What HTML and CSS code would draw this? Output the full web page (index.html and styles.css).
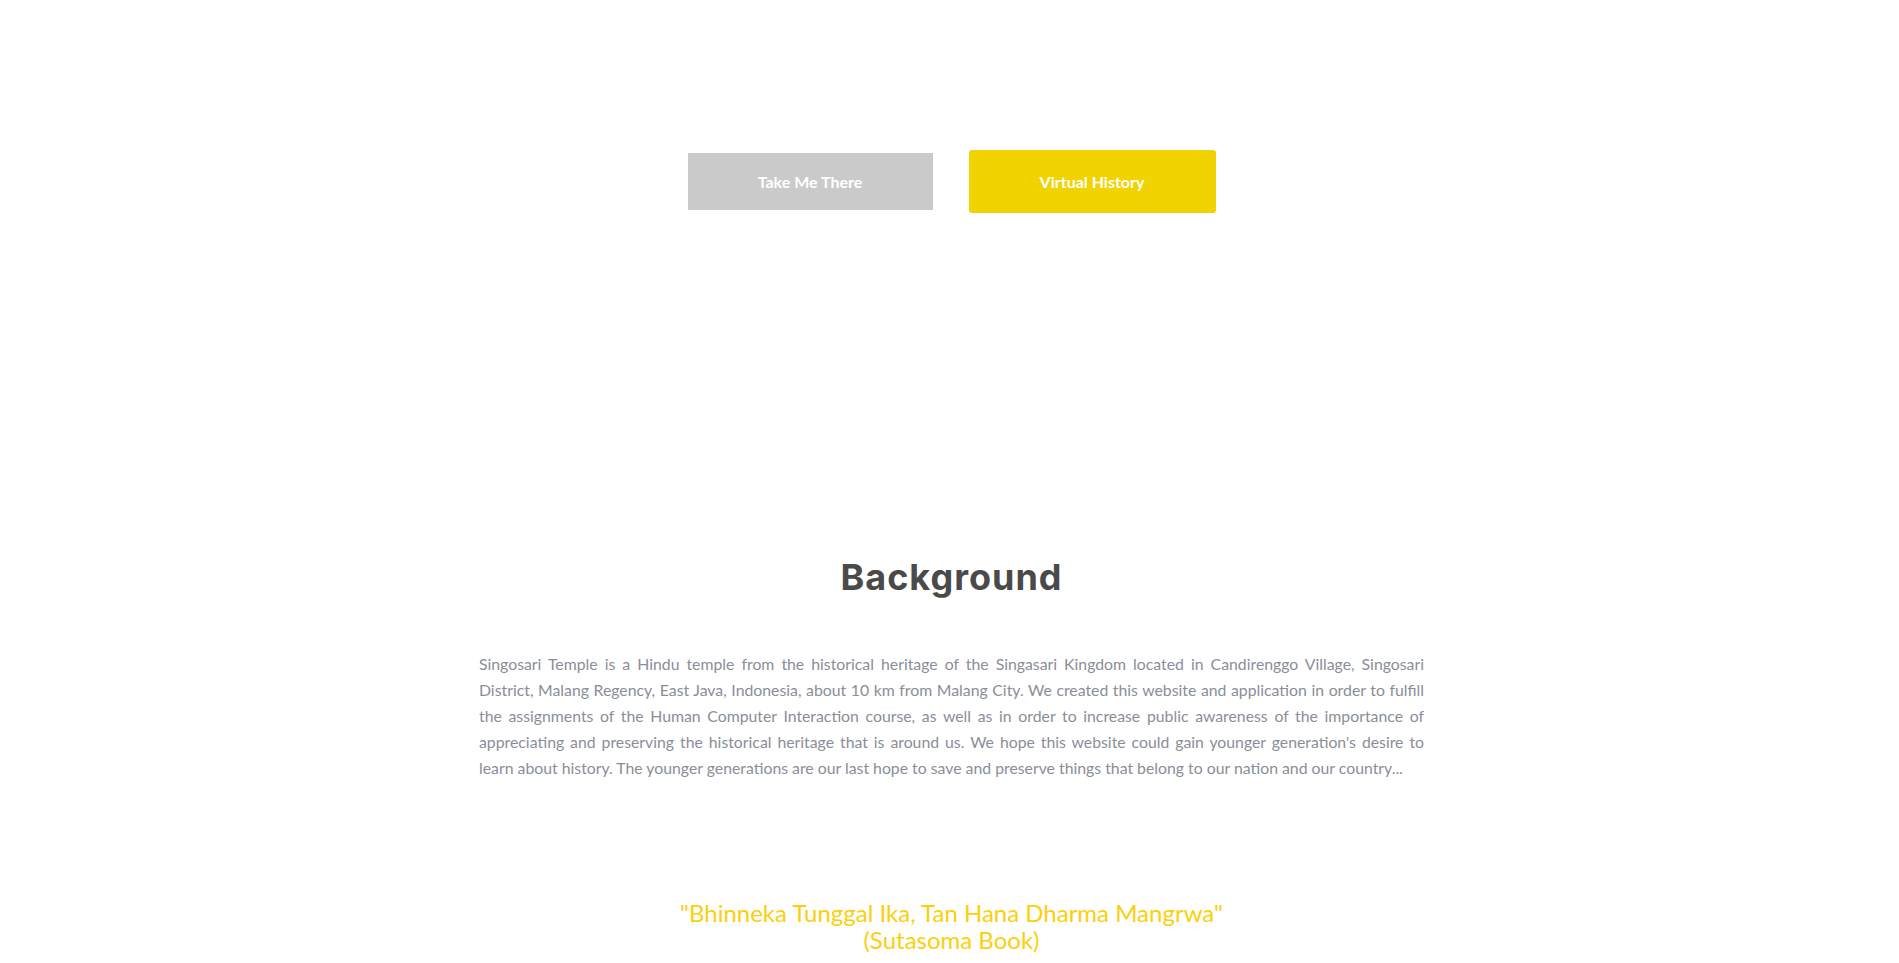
FILE: index.html
```html
<!DOCTYPE html>
<html lang="en">
<head>
<meta charset="utf-8">
<title>Singosari Temple</title>
<link rel="stylesheet" href="styles.css">
</head>
<body>
<section class="hero">
  <a class="btn btn-grey" href="#">Take Me There</a>
  <a class="btn btn-yellow" href="#">Virtual History</a>
</section>
<section class="background">
  <h2 class="title">Background</h2>
  <p class="text">Singosari Temple is a Hindu temple from the historical heritage of the Singasari Kingdom located in Candirenggo Village, Singosari District, Malang Regency, East Java, Indonesia, about 10 km from Malang City. We created this website and application in order to fulfill the assignments of the Human Computer Interaction course, as well as in order to increase public awareness of the importance of appreciating and preserving the historical heritage that is around us. We hope this website could gain younger generation's desire to learn about history. The younger generations are our last hope to save and preserve things that belong to our nation and our country...</p>
  <p class="quote">"Bhinneka Tunggal Ika, Tan Hana Dharma Mangrwa"<br>(Sutasoma Book)</p>
</section>
</body>
</html>
```
FILE: styles.css
```css
html, body {
  margin: 0;
  padding: 0;
  background: #ffffff;
}
body {
  font-family: "Lato", "Liberation Sans", sans-serif;
  padding-left: 4px;
}
.hero {
  display: flex;
  justify-content: center;
  align-items: center;
  gap: 36px;
  padding-top: 150px;
}
.btn {
  display: flex;
  align-items: center;
  justify-content: center;
  color: #ffffff;
  font-weight: 700;
  font-size: 16px;
  text-decoration: none;
}
.btn-grey {
  width: 245px;
  height: 57px;
  background: #cacaca;
}
.btn-yellow {
  width: 247px;
  height: 63px;
  background: #f2d302;
  border-radius: 3px;
}
.background {
  display: flex;
  flex-direction: column;
  align-items: center;
  padding-top: 342px;
}
.title {
  margin: 0;
  font-family: "Inter", "DejaVu Sans", sans-serif;
  font-weight: 700;
  font-size: 36px;
  line-height: 44px;
  color: #4a4a4a;
  letter-spacing: 1px;
}
.text {
  width: 945px;
  margin: 52px 0 0;
  font-size: 15.8px;
  line-height: 26px;
  color: #8a8e99;
  text-align: justify;
}
.quote {
  margin: 118px 0 0;
  font-size: 24px;
  line-height: 27px;
  color: #fccf0c;
  text-align: center;
}
```
